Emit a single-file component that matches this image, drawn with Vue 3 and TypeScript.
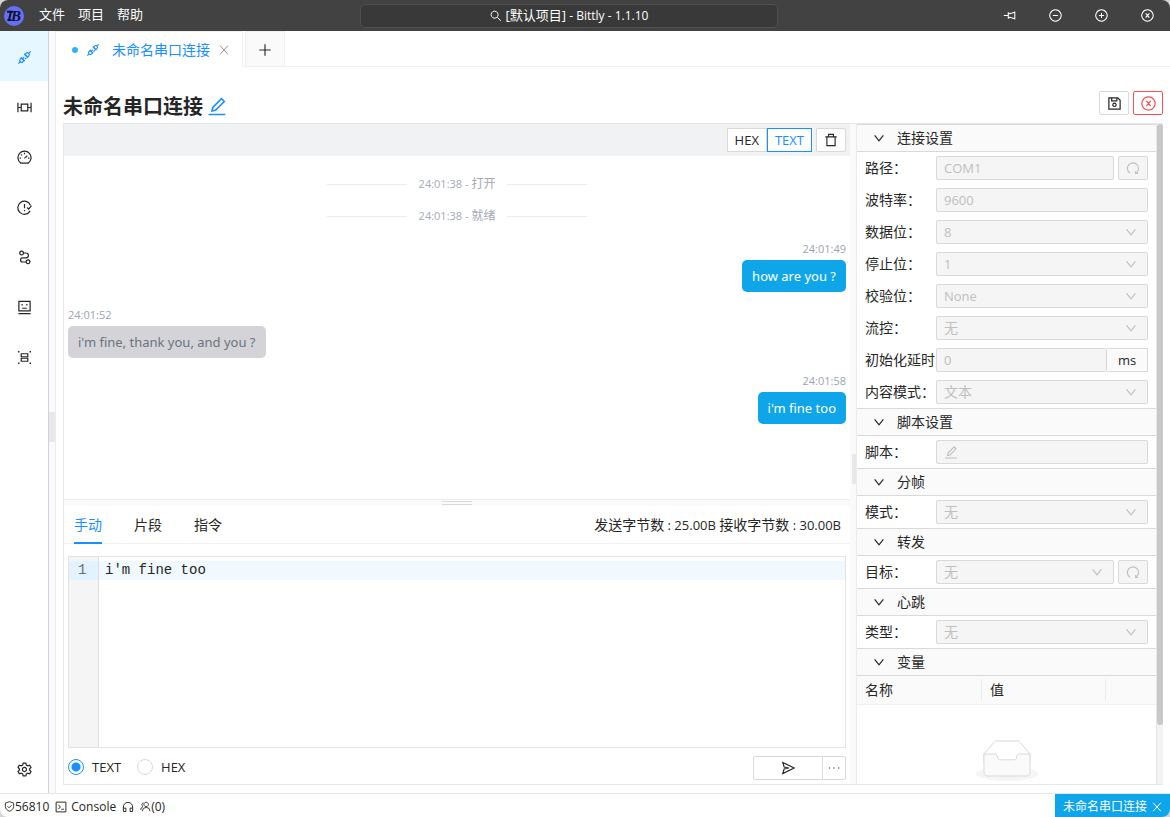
<script setup lang="ts">
import { h, ref } from 'vue'

interface Field {
  id: string
  label: string
  kind: 'text' | 'select' | 'unit' | 'script'
  value: string
  reload?: boolean
}
interface Section {
  title: string
  fields: Field[]
}
interface Message {
  time: string
  text: string
  sent: boolean
}

const shapes: Record<string, string[]> = {
  plug: [
    'M8.4 4.8l2.8 2.8 1.5-1.5a2 2 0 0 0-2.8-2.8zM12.7 3.3l1.8-1.8',
    'M4.8 8.4l2.8 2.8-1.5 1.5a2 2 0 0 1-2.8-2.8zM3.3 12.7l-1.8 1.8',
    'M4.2 7.8l4 4M7.8 4.2l4 4M6 9.2l1.5-1.5M8.5 9.8L10 8.3',
  ],
  frame: ['M1 3v10M15 3v10M4.5 4.5h7v7h-7zM1 8h3.5M11.5 8H15'],
  gauge: ['M4 14a7 7 0 1 1 8 0zM8 9l3-3M8 3v1.5M2.8 8.6h1.4M11.8 8.6h1.4M4.3 4.8l1 1'],
  alert: ['M14.3 5.5A7 7 0 1 0 14 11.6M8 4.2v4.6M8 10.6v1.4M10.7 8l1.8 1.8L15.4 6'],
  nodes: ['M5 1.2a2 2 0 1 1-.1 0zM11.8 10.6a2 2 0 1 1-.1 0zM7 3.2h2.6a2.6 2.6 0 0 1 0 5.2H6a2.2 2.2 0 0 0 0 4.4h3.6'],
  robot: ['M2 1.5h12v10H2zM1.5 14.5h13M5.5 4.3v1.6M10.5 4.3v1.6M5.5 8.8h5'],
  group: ['M4.5 4h7v3.2h-7zM4.5 8.8h7V12h-7zM1 2h1.6M13.4 2H15M13.4 14H15M1 14h1.6M2 1v1.6M14 1v1.6M14 13.4V15M2 13.4V15'],
  gear: [
    'M6.6 1.2h2.8l.6 2.1 1.4.8 2.1-.6 1.4 2.4-1.5 1.6v1l1.5 1.6-1.4 2.4-2.1-.6-1.4.8-.6 2.1H6.6L6 12.7l-1.4-.8-2.1.6-1.4-2.4 1.5-1.6v-1L1.1 5.9l1.4-2.4 2.1.6L6 3.3z',
    'M8 5.8a2.2 2.2 0 1 1-.1 0z',
  ],
  search: ['M6.2 1.5a4.7 4.7 0 1 1-.1 0zM9.8 9.8l4.7 4.7'],
  pin: ['M1 8h5.5M6.5 4v8M6.5 5l2 .8L14.5 4v8l-6-1.8-2 .8M14.5 3v10'],
  minus: ['M8 1a7 7 0 1 1-.1 0zM4.8 8h6.4'],
  plusCircle: ['M8 1a7 7 0 1 1-.1 0zM4.8 8h6.4M8 4.8v6.4'],
  closeCircle: ['M8 1a7 7 0 1 1-.1 0zM5.7 5.3l4.6 5.4M10.3 5.3l-4.6 5.4'],
  close: ['M2.8 2.3l10.4 11.4M13.2 2.3L2.8 13.7'],
  plus: ['M8 1.5v13M1.5 8h13'],
  edit: ['M1.3 14.8h13.4M4 12l.6-2.8 7-7 2.2 2.2-7 7z'],
  save: ['M2 2h9.5L14 4.5V14H2zM5 2v3.2h5.5V2M8 7.6a1.8 1.8 0 1 1-.1 0z'],
  trash: ['M1.5 4.5h13M5.2 4.5v-3h5.6v3M3.3 4.5v10h9.4v-10'],
  down: ['M2.2 4.5L8 11.8l5.8-7.3'],
  reload: ['M4.6 13.9A6.4 6.4 0 1 1 11.8 13.6M11 11.3v3h3'],
  send: ['M2 1.6L15 8 2 14.4l1.6-5.2L9 8 3.6 6.8z'],
  dots: ['M2 8h1.4M7.3 8h1.4M12.6 8H14'],
  shield: ['M8 1l6 2v5c0 3.4-2.8 5.6-6 7-3.2-1.4-6-3.6-6-7V3zM5 7.6l2.3 2.3L11.2 6'],
  console: ['M1.5 1.5h13v13h-13zM4.4 5l2.8 3-2.8 3M8.5 11h3.3'],
  headset: ['M1.8 14V8a6.2 6.2 0 0 1 12.4 0v6h-3.4V9.5h3.4M1.8 9.5h3.4V14H1.8'],
  team: ['M9 1.8a3.2 3.2 0 1 1-.1 0zM3.5 14.8a5.5 5.5 0 0 1 11 0M5 2.5A3 3 0 0 0 4.4 8M1 13a5.6 5.6 0 0 1 3.4-5'],
}

const Icon = (props: { name: string }) =>
  h(
    'svg',
    { viewBox: '0 0 16 16', class: 'icon', 'aria-hidden': 'true' },
    shapes[props.name].map((d) => h('path', { d, fill: 'none', stroke: 'currentColor' })),
  )
Icon.props = ['name']

const menus = ['文件', '项目', '帮助']
const windowButtons = [
  { icon: 'pin', label: '置顶' },
  { icon: 'minus', label: '最小化' },
  { icon: 'plusCircle', label: '最大化' },
  { icon: 'closeCircle', label: '关闭' },
]
const sidebar = [
  { icon: 'plug', label: '连接' },
  { icon: 'frame', label: '指令' },
  { icon: 'gauge', label: '面板' },
  { icon: 'alert', label: '定时' },
  { icon: 'nodes', label: '流程' },
  { icon: 'robot', label: '机器人' },
  { icon: 'group', label: '分组' },
]
const statusEvents = ['打开', '就绪']
const messages: Message[] = [
  { time: '24:01:49', text: 'how are you ?', sent: true },
  { time: '24:01:52', text: "i'm fine, thank you, and you ?", sent: false },
  { time: '24:01:58', text: "i'm fine too", sent: true },
]
const sections: Section[] = [
  {
    title: '连接设置',
    fields: [
      { id: 'path', label: '路径：', kind: 'text', value: 'COM1', reload: true },
      { id: 'baud', label: '波特率：', kind: 'text', value: '9600' },
      { id: 'data', label: '数据位：', kind: 'select', value: '8' },
      { id: 'stop', label: '停止位：', kind: 'select', value: '1' },
      { id: 'parity', label: '校验位：', kind: 'select', value: 'None' },
      { id: 'flow', label: '流控：', kind: 'select', value: '无' },
      { id: 'delay', label: '初始化延时', kind: 'unit', value: '0' },
      { id: 'mode', label: '内容模式：', kind: 'select', value: '文本' },
    ],
  },
  { title: '脚本设置', fields: [{ id: 'script', label: '脚本：', kind: 'script', value: '' }] },
  { title: '分帧', fields: [{ id: 'split', label: '模式：', kind: 'select', value: '无' }] },
  { title: '转发', fields: [{ id: 'target', label: '目标：', kind: 'select', value: '无', reload: true }] },
  { title: '心跳', fields: [{ id: 'beat', label: '类型：', kind: 'select', value: '无' }] },
  { title: '变量', fields: [] },
]
const tabs = ['手动', '片段', '指令']
const activeTab = ref('手动')
const view = ref('TEXT')
const format = ref('TEXT')
const draft = ref("i'm fine too")
</script>

<template>
  <div class="window">
    <header class="titlebar">
      <svg class="logo" viewBox="0 0 20 20" aria-hidden="true">
        <circle cx="10" cy="10" r="10" />
        <path d="M3 5.8h6M3.4 14h4M7 5.8L5 14" />
        <text x="7" y="15">B</text>
      </svg>
      <nav class="menus">
        <button v-for="m in menus" :key="m" type="button">{{ m }}</button>
      </nav>
      <div class="title-center">
        <button class="project" type="button"><Icon name="search" /><span>[默认项目]<span class="latin"> - Bittly - 1.1.10</span></span></button>
      </div>
      <button v-for="b in windowButtons" :key="b.icon" class="window-button" type="button" :aria-label="b.label">
        <Icon :name="b.icon" />
      </button>
    </header>

    <div class="body">
      <nav class="sidebar">
        <button v-for="(s, i) in sidebar" :key="s.icon" type="button" :class="{ active: i === 0 }" :aria-label="s.label">
          <Icon :name="s.icon" />
        </button>
        <button class="settings" type="button" aria-label="设置"><Icon name="gear" /></button>
      </nav>
      <div class="splitter side-splitter"><i></i></div>

      <main class="content">
        <div class="file-tabs">
          <div class="file-tab">
            <i class="dot"></i>
            <Icon name="plug" />
            <span>未命名串口连接</span>
            <button type="button" aria-label="关闭标签"><Icon name="close" /></button>
          </div>
          <button class="add-tab" type="button" aria-label="新建标签"><Icon name="plus" /></button>
        </div>

        <div class="heading">
          <h1>未命名串口连接</h1>
          <button class="rename" type="button" aria-label="重命名"><Icon name="edit" /></button>
          <div class="heading-actions">
            <button class="btn" type="button" aria-label="保存"><Icon name="save" /></button>
            <button class="btn danger" type="button" aria-label="断开"><Icon name="closeCircle" /></button>
          </div>
        </div>

        <div class="panels">
          <div class="left">
            <section class="log">
              <div class="log-bar">
                <div class="switch">
                  <button v-for="v in ['HEX', 'TEXT']" :key="v" type="button" :class="{ on: view === v }" @click="view = v">{{ v }}</button>
                </div>
                <button class="btn" type="button" aria-label="清空"><Icon name="trash" /></button>
              </div>
              <div class="stream">
                <div v-for="e in statusEvents" :key="e" class="event"><span>24:01:38 - <b>{{ e }}</b></span></div>
                <div v-for="m in messages" :key="m.time" class="message" :class="{ sent: m.sent }">
                  <time>{{ m.time }}</time>
                  <p>{{ m.text }}</p>
                </div>
              </div>
            </section>
            <div class="row-splitter"><i></i></div>
            <section class="composer">
              <div class="composer-tabs">
                <button v-for="t in tabs" :key="t" type="button" :class="{ on: activeTab === t }" @click="activeTab = t">{{ t }}</button>
                <div class="stats">发送字节数<span class="latin"> : 25.00B </span>接收字节数<span class="latin"> : 30.00B</span></div>
              </div>
              <div class="editor">
                <div class="gutter"><span>1</span></div>
                <textarea v-model="draft" aria-label="发送内容" spellcheck="false"></textarea>
              </div>
              <div class="composer-foot">
                <label v-for="f in ['TEXT', 'HEX']" :key="f"><input v-model="format" type="radio" name="format" :value="f" />{{ f }}</label>
                <div class="send-group">
                  <button class="send" type="button" aria-label="发送"><Icon name="send" /></button>
                  <button class="more" type="button" aria-label="更多"><Icon name="dots" /></button>
                </div>
              </div>
            </section>
          </div>

          <div class="splitter panel-splitter"><i></i></div>

          <aside class="options">
            <div class="options-scroll">
              <section v-for="s in sections" :key="s.title">
                <h2><Icon name="down" />{{ s.title }}</h2>
                <div v-for="f in s.fields" :key="f.id" class="field">
                  <label :for="f.id">{{ f.label }}</label>
                  <div class="control">
                    <input v-if="f.kind === 'text' || f.kind === 'unit'" :id="f.id" type="text" :value="f.value" disabled />
                    <template v-else-if="f.kind === 'select'">
                      <select :id="f.id" disabled><option>{{ f.value }}</option></select>
                      <Icon name="down" />
                    </template>
                    <button v-else :id="f.id" class="script" type="button" disabled><Icon name="edit" /></button>
                    <span v-if="f.kind === 'unit'" class="unit">ms</span>
                  </div>
                  <button v-if="f.reload" class="reload" type="button" disabled aria-label="刷新"><Icon name="reload" /></button>
                </div>
              </section>
              <table>
                <thead>
                  <tr><th class="name"><span>名称</span></th><th class="value"><span>值</span></th><th></th></tr>
                </thead>
                <tbody>
                  <tr>
                    <td colspan="3">
                      <svg class="empty" viewBox="0 0 64 41" aria-hidden="true">
                        <ellipse cx="32" cy="34" rx="31" ry="7" fill="#f5f5f5" />
                        <g stroke="#d9d9d9">
                          <path fill="#fff" d="M55 13.8L44.9 2.3C44.4 1.5 43.7 1 42.9 1H21.1c-.8 0-1.5.5-2 1.3L9 13.8V23h46z" />
                          <path fill="#fafafa" d="M41.6 16.9c0-1.6 1-2.9 2.2-2.9H55v18.1c0 2.1-1.3 3.9-3 3.9H12c-1.7 0-3-1.8-3-3.9V14h11.2c1.2 0 2.2 1.3 2.2 2.9s1 2.9 2.2 2.9h14.8c1.2 0 2.2-1.3 2.2-2.9z" />
                        </g>
                      </svg>
                    </td>
                  </tr>
                </tbody>
              </table>
            </div>
            <div class="scrollbar" aria-hidden="true"><i></i></div>
          </aside>
        </div>
      </main>
    </div>

    <footer class="statusbar">
      <span><Icon name="shield" />56810</span>
      <button type="button"><Icon name="console" />Console</button>
      <button type="button" aria-label="支持"><Icon name="headset" /></button>
      <span><Icon name="team" />(0)</span>
      <div class="connection">未命名串口连接<button type="button" aria-label="关闭连接"><Icon name="close" /></button></div>
    </footer>
  </div>
</template>

<style>
html,
body {
  background: #d4d4d4;
}
</style>

<style scoped>
.window,
.window * {
  box-sizing: border-box;
}
.window {
  display: flex;
  flex-direction: column;
  height: 100vh;
  overflow: hidden;
  border-radius: 8px;
  background: #fff;
  color: #262626;
  font-family: "Open Sans", "Noto Sans CJK SC", sans-serif;
  font-size: 14px;
  line-height: 20px;
}
button,
input,
select,
textarea {
  margin: 0;
  padding: 0;
  border: 0;
  border-radius: 0;
  background: none;
  color: inherit;
  font: inherit;
}
button {
  display: flex;
  align-items: center;
  justify-content: center;
}
.icon {
  display: block;
  flex: none;
  width: 14px;
  height: 14px;
  stroke-width: 1.3;
}
.latin {
  font-size: 13px;
}

.titlebar {
  display: flex;
  align-items: center;
  flex: none;
  height: 31px;
  background: #424242;
  color: #fff;
  font-size: 13px;
}
.logo {
  flex: none;
  width: 20px;
  height: 20px;
  margin-left: 4px;
}
.logo circle {
  fill: #6470f5;
}
.logo path {
  fill: none;
  stroke: #0c1230;
  stroke-width: 2;
}
.logo text {
  fill: #0c1230;
  font: italic bold 15px "Liberation Serif", serif;
}
.menus {
  display: flex;
  gap: 13px;
  margin: 0 9px 3px 15px;
}
.menus button {
  line-height: 18px;
  white-space: nowrap;
}
.title-center {
  display: flex;
  flex: 1;
  justify-content: center;
}
.project {
  gap: 4px;
  width: 418px;
  height: 24px;
  border: 1px solid #505050;
  border-radius: 5px;
  background: #393939;
}
.project .latin {
  font-size: 12px;
}
.project .icon {
  width: 12px;
  height: 12px;
}
.window-button {
  width: 46px;
  height: 31px;
}
.window-button .icon {
  width: 13px;
  height: 13px;
}

.body {
  display: flex;
  flex: 1;
  min-height: 0;
}
.sidebar {
  display: flex;
  flex-direction: column;
  width: 49px;
  border-right: 1px solid #cfd2df;
}
.sidebar button {
  height: 50px;
  padding-top: 2px;
}
.sidebar .icon {
  width: 15px;
  height: 15px;
}
.sidebar .active {
  background: #e6f7ff;
  color: #1890ff;
}
.sidebar .settings {
  margin-top: auto;
}
.splitter {
  display: flex;
  align-items: center;
  flex: none;
  width: 7px;
  background: #fafafa;
  border-right: 1px solid #ececec;
}
.splitter i {
  width: 6px;
  height: 30px;
  margin-top: 30px;
  background: #e8e8e8;
}
.panel-splitter i {
  width: 4px;
  margin-left: 2px;
}
.content {
  display: flex;
  flex: 1;
  flex-direction: column;
  min-width: 0;
}

.file-tabs {
  display: flex;
  flex: none;
  height: 36px;
  background: linear-gradient(#f0f0f0, #f0f0f0) bottom / 100% 1px no-repeat;
}
.file-tab {
  display: flex;
  align-items: center;
  width: 187px;
  padding-left: 16px;
  border: solid #f0f0f0;
  border-width: 1px 1px 0 0;
  background: #fff;
  color: #1890ff;
  white-space: nowrap;
}
.dot {
  width: 6px;
  height: 6px;
  margin-right: 8px;
  border-radius: 50%;
  background: #29b6f6;
}
.file-tab span {
  margin: 0 7px 0 12px;
}
.file-tab button {
  color: #8c8c8c;
}
.file-tab button .icon {
  width: 12px;
  height: 12px;
  margin-left: 1px;
}
.add-tab {
  width: 40px;
  margin-left: 2px;
  padding-top: 2px;
  border: 1px solid #f0f0f0;
  background: #fafafa;
}

.heading {
  display: flex;
  align-items: center;
  flex: none;
  height: 24px;
  margin: 24px 7px 8px;
}
h1 {
  margin: 8px 0 0;
  font-size: 20px;
  line-height: 24px;
  font-weight: 700;
}
.rename {
  margin: 6px 0 0 4px;
  color: #1890ff;
}
.rename .icon {
  width: 20px;
  height: 20px;
}
.heading-actions {
  display: flex;
  gap: 4px;
  margin-left: auto;
}
.btn {
  width: 30px;
  height: 24px;
  border: 1px solid #d9d9d9;
  border-radius: 2px;
  background: #fff;
}
.heading-actions .icon {
  width: 15px;
  height: 15px;
}
.danger {
  border-color: #ff4d4f;
  color: #ff4d4f;
}

.panels {
  display: flex;
  flex: 1;
  min-height: 0;
  margin: 0 7px 8px;
  border: solid #e5e7eb;
  border-width: 1px 0 1px 1px;
}
.left {
  display: grid;
  flex: 1;
  grid-template-rows: minmax(0, 23fr) 7px minmax(0, 17fr);
  min-width: 0;
}
.log {
  display: flex;
  flex-direction: column;
  overflow: hidden;
}
.log-bar {
  display: flex;
  justify-content: flex-end;
  gap: 4px;
  padding: 4px;
  background: #f1f2f4;
}
.switch {
  display: flex;
  background: #fff;
}
.switch button {
  height: 24px;
  padding: 0 7px;
  border: 1px solid #d9d9d9;
  font-size: 13px;
}
.switch .on {
  border-color: #1890ff;
  color: #1890ff;
}
.stream {
  flex: 1;
  padding: 12px 4px;
}
.event {
  display: flex;
  align-items: center;
  gap: 12px;
  width: 260px;
  height: 32px;
  margin: 0 auto;
  color: #a3a9b5;
  font-size: 11px;
  line-height: 22px;
}
.event::before,
.event::after {
  flex: 1;
  height: 1px;
  background: #ececee;
  content: "";
}
.event b {
  font-size: 12px;
  font-weight: 400;
}
.message {
  display: flex;
  flex-direction: column;
  align-items: flex-start;
  margin: 4px 0 10px;
}
.message + .message {
  margin-top: 0;
}
.sent {
  align-items: flex-end;
}
time {
  height: 24px;
  color: #9ca3af;
  font-size: 11px;
  line-height: 26px;
}
.message p {
  margin: 0;
  padding: 0 10px;
  border-radius: 5px;
  background: #d4d4d8;
  color: #6b7280;
  font-family: "Noto Sans", "Noto Sans CJK SC", sans-serif;
  font-size: 13px;
  line-height: 32px;
}
.sent p {
  background: #0ea5e9;
  color: #fff;
}
.row-splitter {
  display: flex;
  align-items: center;
  justify-content: center;
  border-top: 1px solid #ececec;
  background: #fafafa;
}
.row-splitter i {
  width: 30px;
  height: 4px;
  border: solid #d9d9d9;
  border-width: 1px 0;
}

.composer {
  display: flex;
  flex-direction: column;
}
.composer-tabs {
  display: flex;
  gap: 32px;
  height: 38px;
  padding: 0 9px 0 10px;
  border-bottom: 1px solid #f0f0f0;
}
.composer-tabs button {
  height: 38px;
  border: solid transparent;
  border-width: 2px 0;
}
.composer-tabs .on {
  border-bottom-color: #1890ff;
  color: #1890ff;
}
.stats {
  margin-left: auto;
  line-height: 38px;
  white-space: pre;
}
.editor {
  display: flex;
  flex: 1;
  margin: 12px 4px 0;
  border: 1px solid #e2e4e6;
  font-family: "Liberation Mono", monospace;
  line-height: 19px;
}
.gutter {
  width: 30px;
  padding-top: 4px;
  border-right: 1px solid #ddd;
  background: #f5f5f5;
  color: #6c6c6c;
}
.gutter span {
  display: block;
  padding-left: 9px;
  background: #e2f2ff;
}
textarea {
  flex: 1;
  padding: 4px 6px;
  outline: 0;
  background: linear-gradient(#f0f9ff, #f0f9ff) 0 4px / 100% 19px no-repeat;
  resize: none;
}
.composer-foot {
  display: flex;
  align-items: center;
  gap: 16px;
  height: 36px;
  padding: 2px 4px 0;
  font-size: 13px;
}
.composer-foot label {
  display: flex;
  align-items: center;
  gap: 8px;
}
input[type="radio"] {
  width: 16px;
  height: 16px;
  border: 1px solid #d9d9d9;
  border-radius: 50%;
  appearance: none;
}
input[type="radio"]:checked {
  border-color: #1890ff;
  background: radial-gradient(#1890ff 4px, #fff 5px);
}
.send-group {
  display: flex;
  height: 24px;
  margin-left: auto;
  margin-top: 2px;
  border: 1px solid #d9d9d9;
  border-radius: 2px;
}
.send {
  width: 69px;
  border-right: 1px solid #d9d9d9;
}
.more {
  width: 22px;
}

.options {
  display: flex;
  flex: none;
  width: 306px;
  min-height: 0;
}
.options-scroll {
  flex: 1;
  overflow: hidden;
}
h2 {
  display: flex;
  align-items: center;
  gap: 12px;
  height: 28px;
  margin: 0;
  padding-left: 16px;
  border: solid #d9d9d9;
  border-width: 1px 0;
  background: #fafafa;
  font-size: 14px;
  font-weight: 400;
}
h2 .icon {
  width: 12px;
  height: 12px;
  stroke-width: 1.6;
}
.field {
  display: flex;
  height: 32px;
  padding: 4px 8px;
}
.field label {
  flex: none;
  width: 71px;
  line-height: 24px;
  white-space: nowrap;
}
.control {
  position: relative;
  display: flex;
  flex: 1;
  min-width: 0;
  color: #bfbfbf;
}
.control input,
.control select,
.script,
.reload {
  flex: 1;
  min-width: 0;
  height: 24px;
  padding: 0 7px;
  border: 1px solid #d9d9d9;
  border-radius: 2px;
  background: #f5f5f5;
  color: #bfbfbf;
  font-size: 14px;
  opacity: 1;
  appearance: none;
}
.control input {
  font-size: 13px;
}
.control select:not(#flow, #mode, #split, #target, #beat) {
  font-size: 13px;
}
.control select + .icon {
  position: absolute;
  top: 6px;
  right: 11px;
  width: 12px;
  height: 12px;
  stroke-width: 1.6;
}
.script {
  justify-content: flex-start;
}
.unit {
  width: 41px;
  border: 1px solid #d9d9d9;
  border-left: 0;
  background: #fafafa;
  color: #262626;
  font-size: 13px;
  line-height: 22px;
  text-align: center;
}
.reload {
  flex: none;
  width: 30px;
  margin-left: 4px;
}
table {
  width: 100%;
  border-spacing: 0;
  table-layout: fixed;
}
th {
  height: 29px;
  padding: 0;
  border-bottom: 1px solid #f0f0f0;
  background: #fafafa;
  font-weight: 400;
  text-align: left;
}
th span {
  display: block;
  padding-left: 8px;
  border-right: 1px solid #ececec;
  line-height: 22px;
}
.name {
  width: 125px;
}
.value {
  width: 124px;
}
td {
  padding: 35px 0;
}
.empty {
  display: block;
  width: 64px;
  height: 41px;
  margin: 0 auto;
}
.scrollbar {
  width: 7px;
  border-left: 1px solid #e5e5e5;
  background: #f3f3f3;
}
.scrollbar i {
  display: block;
  height: 91%;
  border-radius: 3px;
  background: #c8c8c8;
}

.statusbar {
  display: flex;
  align-items: center;
  flex: none;
  gap: 6px;
  height: 24px;
  padding-left: 4px;
  border-top: 1px solid #e5e7eb;
  font-size: 12px;
}
.statusbar > span,
.statusbar > button {
  display: flex;
  align-items: center;
  padding-top: 2px;
}
.statusbar .icon {
  width: 11px;
  height: 11px;
}
.statusbar button .icon {
  width: 12px;
  height: 12px;
}
.statusbar > button {
  gap: 4px;
}
.connection {
  display: flex;
  align-items: center;
  align-self: stretch;
  gap: 4px;
  margin-left: auto;
  padding: 2px 7px 0 8px;
  background: #0ea5e9;
  color: #fff;
}
</style>
